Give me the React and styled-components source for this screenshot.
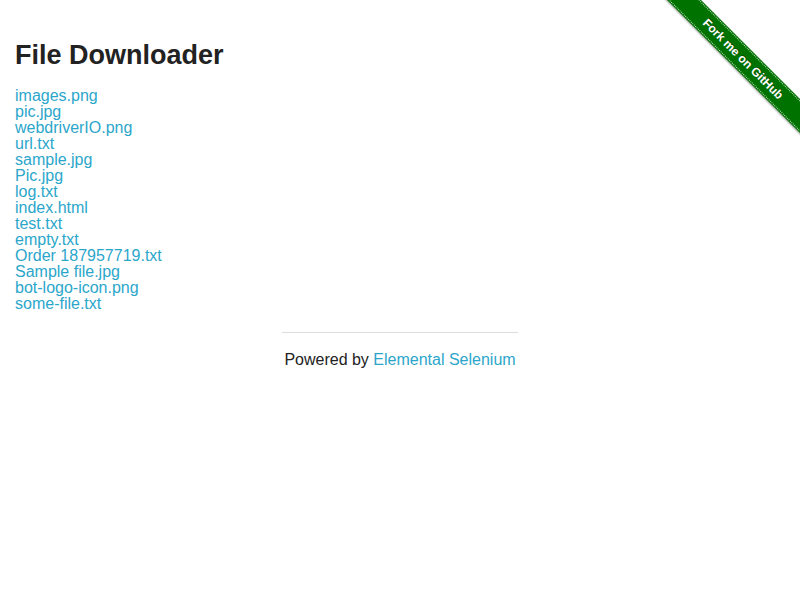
import React from 'react';
import styled, { createGlobalStyle } from 'styled-components';

const GlobalStyle = createGlobalStyle`
  html, body {
    margin: 0;
    padding: 0;
    background: #fff;
  }
  body {
    font-family: "Liberation Sans", Arial, Helvetica, sans-serif;
    color: #222;
  }
`;

const Page = styled.div`
  position: relative;
  width: 800px;
  min-height: 600px;
`;

const Content = styled.div`
  padding: 39px 15px 0 15px;
`;

const Title = styled.h3`
  margin: 0 0 17px 0;
  font-size: 27px;
  line-height: 1.2;
  font-weight: 700;
  color: #222;
`;

const FileList = styled.div`
  display: flex;
  flex-direction: column;
  align-items: flex-start;
`;

const FileLink = styled.a`
  display: block;
  font-size: 16px;
  line-height: 16px;
  color: #2ba6cb;
  text-decoration: none;
`;

const Footer = styled.div`
  display: flex;
  flex-direction: column;
  align-items: center;
  margin-top: 20px;
`;

const Rule = styled.hr`
  width: 236px;
  margin: 0 0 17px 0;
  border: 0;
  border-top: 1px solid #ddd;
`;

const FooterText = styled.div`
  font-size: 16px;
  line-height: 20px;
  color: #222;
`;

const FooterLink = styled.a`
  color: #2ba6cb;
  text-decoration: none;
`;

const RibbonWrap = styled.a`
  position: absolute;
  top: 0;
  right: 0;
  width: 150px;
  height: 150px;
  overflow: hidden;
  text-decoration: none;
`;

const Ribbon = styled.div`
  position: absolute;
  left: -17px;
  top: 47px;
  width: 220px;
  height: 24px;
  background: #007200;
  transform: rotate(45deg);
  display: flex;
  align-items: center;
  justify-content: center;
  box-shadow: 0 1px 2px rgba(0, 0, 0, 0.35);

  &::before, &::after {
    content: '';
    position: absolute;
    left: 0;
    right: 0;
    border-top: 1px dotted rgba(255, 255, 255, 0.75);
  }
  &::before { top: 1px; }
  &::after { bottom: 1px; }
`;

const RibbonText = styled.span`
  font-family: "Liberation Sans", Arial, sans-serif;
  font-size: 12px;
  font-weight: 700;
  color: #fff;
  text-shadow: 0 -1px 0 rgba(0, 0, 0, 0.4);
`;

const files = [
  'images.png',
  'pic.jpg',
  'webdriverIO.png',
  'url.txt',
  'sample.jpg',
  'Pic.jpg',
  'log.txt',
  'index.html',
  'test.txt',
  'empty.txt',
  'Order 187957719.txt',
  'Sample file.jpg',
  'bot-logo-icon.png',
  'some-file.txt',
];

const App = () => {
  return (
    <Page>
      <GlobalStyle />
      <RibbonWrap href="#">
        <Ribbon>
          <RibbonText>Fork me on GitHub</RibbonText>
        </Ribbon>
      </RibbonWrap>
      <Content>
        <Title>File Downloader</Title>
        <FileList>
          {files.map((name) => (
            <FileLink key={name} href="#">{name}</FileLink>
          ))}
        </FileList>
      </Content>
      <Footer>
        <Rule />
        <FooterText>
          Powered by <FooterLink href="#">Elemental Selenium</FooterLink>
        </FooterText>
      </Footer>
    </Page>
  );
};

export default App;
